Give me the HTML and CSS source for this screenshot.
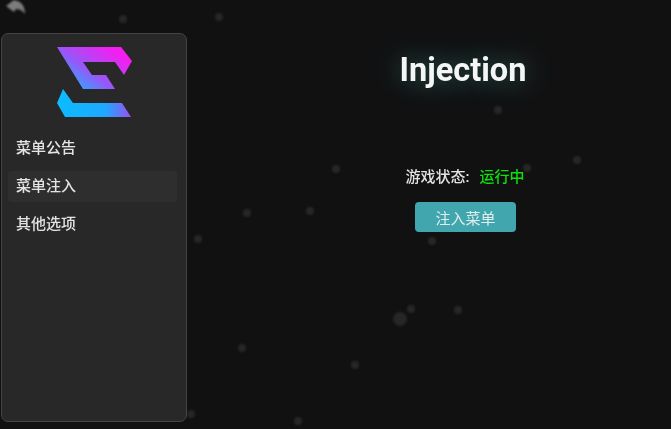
FILE: index.html
```html
<!DOCTYPE html>
<html lang="zh">
<head>
    <meta charset="UTF-8">
    <meta name="viewport" content="width=device-width, initial-scale=1.0">
    <title>Injection</title>
    <link rel="stylesheet" href="styles.css">
</head>
<body>
    <!-- particles behind everything -->
    <svg class="particles" width="671" height="429" viewBox="0 0 671 429">
        <g fill="#272727">
            <circle cx="123" cy="19" r="4"/>
            <circle cx="219" cy="17" r="4"/>
            <circle cx="498" cy="110" r="4"/>
            <circle cx="577" cy="160" r="4"/>
            <circle cx="336" cy="169" r="4"/>
            <circle cx="527" cy="168" r="4"/>
            <circle cx="247" cy="213" r="4"/>
            <circle cx="310" cy="211" r="4"/>
            <circle cx="198" cy="239" r="4"/>
            <circle cx="432" cy="241" r="4"/>
            <circle cx="400" cy="319" r="7"/>
            <circle cx="411" cy="309" r="4"/>
            <circle cx="458" cy="310" r="4"/>
            <circle cx="242" cy="348" r="4"/>
            <circle cx="355" cy="365" r="4"/>
            <circle cx="191" cy="414" r="4"/>
            <circle cx="298" cy="421" r="4"/>
        </g>
    </svg>

    <svg class="back" width="22" height="16" viewBox="0 0 22 16">
        <path d="M1 6 L9 0 L12 1 C17 2 20 7 20 14 C17 10 14 9 11 9 L9 12 Z" fill="#7c7c7c"/>
    </svg>

    <div class="app">
        <aside class="sidebar">
            <svg class="logo" width="75" height="70" viewBox="57 47 75 70">
                <defs>
                    <linearGradient id="top-grad" gradientUnits="userSpaceOnUse" x1="75" y1="85" x2="113" y2="32">
                        <stop offset="0" stop-color="#3a9fff"/>
                        <stop offset="0.31" stop-color="#9a55f8"/>
                        <stop offset="0.78" stop-color="#f41ef0"/>
                    </linearGradient>
                    <linearGradient id="bottom-grad" x1="0" y1="0" x2="1" y2="0">
                        <stop offset="0" stop-color="#0cbcff"/>
                        <stop offset="0.65" stop-color="#1ea8ff"/>
                        <stop offset="1" stop-color="#9a50f0"/>
                    </linearGradient>
                </defs>
                <path d="M57 47 H121 L132 61 L124 75 L115 62 H83 L92 75 H106 L115 89 H83 Z" fill="url(#top-grad)"/>
                <path d="M63 89 L73 103 H122 L131 117 H65 L57 103 Z" fill="url(#bottom-grad)"/>
            </svg>
            <nav class="menu">
                <a class="menu-item">菜单公告</a>
                <a class="menu-item active">菜单注入</a>
                <a class="menu-item">其他选项</a>
            </nav>
        </aside>

        <main class="content">
            <h1 class="title">Injection</h1>
            <div class="status">
                <span>游戏状态:</span>
                <span class="running">运行中</span>
            </div>
            <button class="inject-btn">注入菜单</button>
        </main>
    </div>
</body>
</html>
```

FILE: styles.css
```css
html, body {
    margin: 0;
    height: 100%;
    overflow: hidden;
}
body {
    position: relative;
    background: #111112;
    color: #e4e4e4;
    font-family: Roboto, "Noto Sans CJK SC", sans-serif;
}
.particles {
    position: absolute;
    left: 0;
    top: 0;
    filter: blur(1.2px);
}
.back {
    position: absolute;
    left: 5px;
    top: 0;
    filter: blur(0.8px);
}
.app {
    position: relative;
    display: flex;
    height: 100%;
    box-sizing: border-box;
    padding: 33px 0 7px 1px;
}
.sidebar {
    width: 186px;
    box-sizing: border-box;
    padding: 13px 9px 0 6px;
    background: #282829;
    border: 1px solid #444;
    border-radius: 7px;
}
.logo {
    display: block;
    margin: 0 0 0 49px;
    filter: blur(0.4px);
}
.menu {
    display: flex;
    flex-direction: column;
    gap: 7px;
    margin-top: 16px;
}
.menu-item {
    display: block;
    height: 31px;
    padding-left: 8px;
    font-size: 15px;
    font-weight: 500;
    line-height: 31px;
    border-radius: 3px;
    filter: blur(0.4px);
}
.menu-item.active {
    background: #2e2e2f;
}
.content {
    flex: 1;
    display: flex;
    flex-direction: column;
    align-items: center;
    padding-left: 72px;
}
.title {
    margin: 13px 4px 0 0;
    font-size: 32.5px;
    font-weight: 700;
    line-height: 48px;
    color: #f4f6f6;
    text-shadow: 0 0 28px rgba(120, 230, 220, 0.45);
    filter: blur(0.3px);
}
.status {
    display: flex;
    gap: 10px;
    margin-top: 71px;
    font-size: 15px;
    font-weight: 500;
    line-height: 24px;
    filter: blur(0.4px);
}
.running {
    color: #0de00d;
}
.inject-btn {
    width: 101px;
    height: 30px;
    margin: 13px 0 0 1px;
    padding: 0;
    border: none;
    border-radius: 4px;
    background: #42a6ae;
    color: #dfeeee;
    font-family: inherit;
    font-size: 15px;
    filter: blur(0.3px);
}
```
